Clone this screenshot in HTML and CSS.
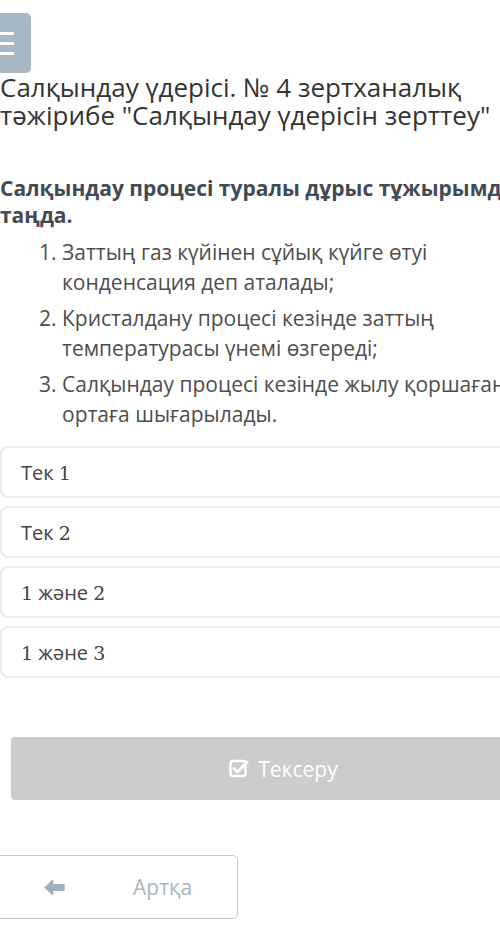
FILE: index.html
```html
<!DOCTYPE html>
<html lang="kk">
<head>
<meta charset="utf-8">
<title>Тест</title>
<link rel="stylesheet" href="styles.css">
</head>
<body>
<div class="page">
  <header class="top">
    <button class="menu-btn" aria-label="menu">
      <span class="bar"></span><span class="bar"></span><span class="bar"></span>
    </button>
  </header>
  <h1 class="title">Салқындау үдерісі. № 4 зертханалық<br>тәжірибе "Салқындау үдерісін зерттеу"</h1>
  <section class="question">
    <p class="q-text">Салқындау процесі туралы дұрыс тұжырымды<br>таңда.</p>
    <ol class="statements">
      <li>Заттың газ күйінен сұйық күйге өтуі<br>конденсация деп аталады;</li>
      <li>Кристалдану процесі кезінде заттың<br>температурасы үнемі өзгереді;</li>
      <li>Салқындау процесі кезінде жылу қоршаған<br>ортаға шығарылады.</li>
    </ol>
  </section>
  <div class="options">
    <div class="option"><span class="opt-label">Тек <span class="num">1</span></span></div>
    <div class="option"><span class="opt-label">Тек <span class="num">2</span></span></div>
    <div class="option"><span class="opt-label"><span class="num">1</span> және <span class="num">2</span></span></div>
    <div class="option"><span class="opt-label"><span class="num">1</span> және <span class="num">3</span></span></div>
  </div>
  <div class="check-row">
    <button class="check-btn">
      <svg class="check-icon" viewBox="0 0 20 20" width="20" height="20">
        <rect x="1.5" y="3" width="15" height="15" rx="2.5" fill="none" stroke="#fff" stroke-width="2.4"/>
        <path d="M5 10.5 L8.5 14 L18 4" fill="none" stroke="#fff" stroke-width="3" stroke-linecap="round" stroke-linejoin="round"/>
      </svg>
      <span>Тексеру</span>
    </button>
  </div>
  <div class="nav-row">
    <button class="back-btn">
      <svg class="back-icon" viewBox="0 0 22 18" width="21" height="17">
        <path d="M1 9 L9 1.5 L9 6 L21 6 L21 12 L9 12 L9 16.5 Z" fill="#9fb1bf" stroke="#9fb1bf" stroke-width="1.5" stroke-linejoin="round"/>
      </svg>
      <span class="back-label">Артқа</span>
    </button>
  </div>
</div>
</body>
</html>
```
FILE: styles.css
```css
html, body {
  margin: 0;
  padding: 0;
  background: #fff;
  overflow: hidden;
}
body {
  width: 500px;
  height: 943px;
  font-family: "Open Sans", "Noto Sans", sans-serif;
}
.page {
  width: 640px;
  display: flex;
  flex-direction: column;
}
.top {
  padding-top: 13px;
  height: 60px;
}
.menu-btn {
  margin: 0 0 0 -15px;
  width: 46px;
  height: 60px;
  border: none;
  border-radius: 5px;
  background: #a7b7c4;
  display: flex;
  flex-direction: column;
  justify-content: center;
  align-items: flex-end;
  gap: 7px;
  padding: 0 17px 0 0;
}
.bar {
  display: block;
  width: 29px;
  height: 3px;
  background: #fff;
}
.title {
  margin: 0;
  font-weight: 400;
  font-size: 26px;
  line-height: 28px;
  color: #333;
  white-space: nowrap;
}
.question {
  margin-top: 46px;
}
.q-text {
  margin: 0;
  font-weight: 700;
  font-size: 21px;
  line-height: 27px;
  color: #434a54;
  white-space: nowrap;
}
.statements {
  margin: 8px 0 0 0;
  padding-left: 62px;
  font-size: 21px;
  line-height: 30px;
  color: #4d4d4d;
  white-space: nowrap;
}
.statements li {
  margin-bottom: 6px;
}
.options {
  margin-top: 11px;
  display: flex;
  flex-direction: column;
  gap: 8px;
}
.option {
  height: 48px;
  border: 2px solid #ececec;
  border-radius: 8px;
  padding-left: 19px;
  display: flex;
  align-items: center;
  font-family: "Open Sans", sans-serif;
  font-size: 20px;
  color: #444;
}
.num {
  font-family: "DejaVu Serif", "Liberation Serif", serif;
  font-size: 19px;
}
.check-row {
  margin-top: 59px;
  padding-left: 11px;
}
.check-btn {
  width: 545px;
  height: 63px;
  border: none;
  border-radius: 4px;
  background: #cccccc;
  color: #fff;
  font-family: "Open Sans", sans-serif;
  font-size: 21px;
  display: flex;
  align-items: center;
  justify-content: center;
  gap: 9px;
  padding: 0;
}
.check-icon {
  margin-top: -2px;
}
.nav-row {
  margin-top: 55px;
}
.back-btn {
  margin-left: -10px;
  width: 248px;
  height: 64px;
  border: 1.5px solid #c2cad0;
  border-radius: 5px;
  background: #fff;
  display: flex;
  align-items: center;
  padding: 0 0 0 53px;
  font-family: "Open Sans", sans-serif;
  font-size: 21px;
  color: #aab4bd;
}
.back-label {
  margin-left: 68px;
}
```
